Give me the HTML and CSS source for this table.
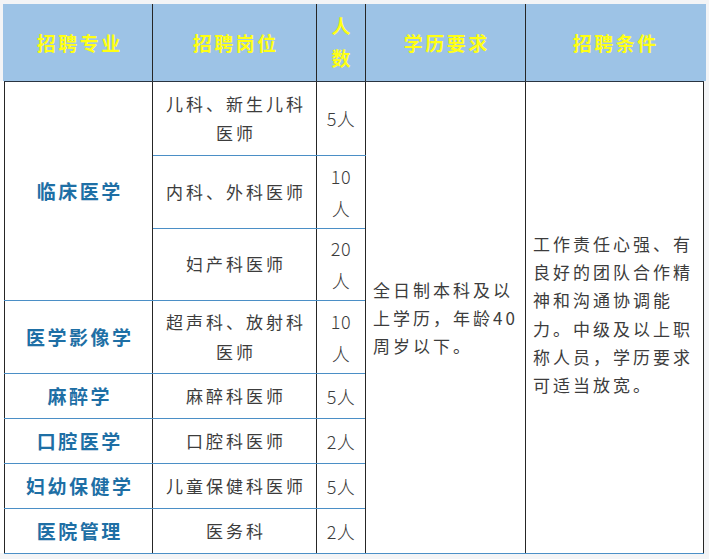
FILE: index.html
```html
<!DOCTYPE html>
<html lang="zh-CN">
<head>
<meta charset="utf-8">
<title>招聘计划</title>
<link rel="stylesheet" href="styles.css">
</head>
<body>
<div class="sheet">
  <table class="jobs">
    <colgroup>
      <col class="c-major">
      <col class="c-post">
      <col class="c-num">
      <col class="c-edu">
      <col class="c-cond">
    </colgroup>
    <thead>
      <tr class="r-head">
        <th>招聘专业</th>
        <th>招聘岗位</th>
        <th class="num">人<br>数</th>
        <th>学历要求</th>
        <th>招聘条件</th>
      </tr>
    </thead>
    <tbody>
      <tr class="r-a">
        <td rowspan="3" class="major">临床医学</td>
        <td class="post">儿科、新生儿科<br>医师</td>
        <td class="num">5人</td>
        <td rowspan="8" class="req">全日制本科及以<br>上学历，年龄40<br>周岁以下。</td>
        <td rowspan="8" class="cond">工作责任心强、有<br>良好的团队合作精<br>神和沟通协调能<br>力。中级及以上职<br>称人员，学历要求<br>可适当放宽。</td>
      </tr>
      <tr class="r-b">
        <td class="post">内科、外科医师</td>
        <td class="num">10<br>人</td>
      </tr>
      <tr class="r-c">
        <td class="post">妇产科医师</td>
        <td class="num">20<br>人</td>
      </tr>
      <tr class="r-d">
        <td class="major">医学影像学</td>
        <td class="post">超声科、放射科<br>医师</td>
        <td class="num">10<br>人</td>
      </tr>
      <tr class="r-s">
        <td class="major">麻醉学</td>
        <td class="post">麻醉科医师</td>
        <td class="num">5人</td>
      </tr>
      <tr class="r-s">
        <td class="major">口腔医学</td>
        <td class="post">口腔科医师</td>
        <td class="num">2人</td>
      </tr>
      <tr class="r-s">
        <td class="major">妇幼保健学</td>
        <td class="post">儿童保健科医师</td>
        <td class="num">5人</td>
      </tr>
      <tr class="r-s">
        <td class="major">医院管理</td>
        <td class="post">医务科</td>
        <td class="num">2人</td>
      </tr>
    </tbody>
  </table>
</div>
</body>
</html>
```
FILE: styles.css
```css
html, body {
  margin: 0;
  padding: 0;
  background: #f3f4f6;
}

.sheet {
  width: 709px;
  height: 559px;
  padding: 4px 0 0 4px;
  box-sizing: border-box;
  background:
    linear-gradient(#9dc3e6, #9dc3e6) 3px 4px / 703px 77px no-repeat,
    linear-gradient(#ffffff, #ffffff) 0 81px / 704px 472px no-repeat,
    #f3f4f6;
}

.jobs {
  border-collapse: collapse;
  table-layout: fixed;
  width: 699px;
  font-family: "Noto Sans CJK SC", "Noto Sans", sans-serif;
}

.c-major { width: 148px; }
.c-post { width: 164px; }
.c-num { width: 49px; }
.c-edu { width: 160px; }
.c-cond { width: 178px; }

.jobs th,
.jobs td {
  padding: 0;
  border-left: 1px solid #262626;
  border-right: 1px solid #262626;
  border-bottom: 1px solid #4b8fc6;
  text-align: center;
  vertical-align: middle;
  white-space: nowrap;
}

.jobs th {
  background: #9dc3e6;
  color: #ffff14;
  font-size: 19px;
  font-weight: 700;
  letter-spacing: 2.5px;
  padding-left: 2.5px;
  border-bottom: 1px solid #2a3440;
}

.jobs thead th:first-child { border-left-color: #9dc3e6; }
.jobs thead th:last-child { border-right-color: #9dc3e6; }

.jobs th.num {
  line-height: 32px;
}

.jobs td {
  background: #ffffff;
  color: #3c3c3c;
  font-size: 17px;
  font-weight: 400;
  letter-spacing: 3px;
}

.jobs td.major {
  color: #1e6fa5;
  font-size: 19px;
  font-weight: 700;
  letter-spacing: 2.5px;
  padding-left: 2.5px;
}

.jobs td.post {
  line-height: 29.5px;
  padding-left: 3px;
}

.jobs td.num {
  line-height: 32px;
  letter-spacing: 0.5px;
  font-size: 18px;
  font-weight: 300;
}

.jobs td.req,
.jobs td.cond {
  text-align: left;
  line-height: 28.3px;
  padding-left: 7px;
  padding-top: 2px;
}

.jobs td.cond {
  padding-top: 0;
  padding-bottom: 5px;
}

.r-head { height: 77px; }
.r-a { height: 74px; }
.r-b { height: 73px; }
.r-c { height: 72px; }
.r-d { height: 73px; }
.r-s { height: 45px; }
```
